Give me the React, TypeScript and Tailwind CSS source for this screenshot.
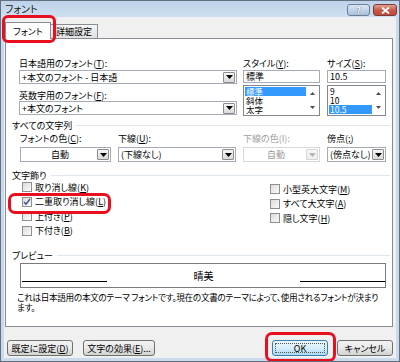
import type { ReactNode } from "react";

const font =
  "font-['Noto_Sans_CJK_JP','Noto_Sans_CJK_SC',sans-serif] [font-feature-settings:'palt']";

function Key({ children }: { children: ReactNode }) {
  return <span className="underline underline-offset-[1px]">{children}</span>;
}

function Arrow({ color = "#000" }: { color?: string }) {
  return (
    <svg width="7" height="4" viewBox="0 0 7 4">
      <path d="M0 0h7L3.5 4z" fill={color} />
    </svg>
  );
}

function DropBtn({ disabled }: { disabled?: boolean }) {
  return (
    <div
      className={`w-[12px] h-[11px] mr-[1px] rounded-[1px] border flex items-center justify-center bg-gradient-to-b ${
        disabled
          ? "border-[#d5d5d5] from-[#f7f7f7] to-[#efefef]"
          : "border-[#8d8d8d] from-[#f6f6f6] to-[#d9d9d9]"
      }`}
    >
      <Arrow color={disabled ? "#b4b4b4" : "#000"} />
    </div>
  );
}

function Combo({
  text,
  className,
  center,
  disabled,
}: {
  text: string;
  className: string;
  center?: boolean;
  disabled?: boolean;
}) {
  return (
    <div
      className={`${className} flex items-center bg-white border ${
        disabled ? "border-[#d9d9d9] text-[#9a9a9a]" : "border-[#a5acb5]"
      }`}
    >
      <span
        className={`flex-1 whitespace-nowrap pl-[2px] ${center ? "text-center" : ""}`}
      >
        {text}
      </span>
      <DropBtn disabled={disabled} />
    </div>
  );
}

function Label({ children, gray }: { children: ReactNode; gray?: boolean }) {
  return (
    <div
      className={`h-[11px] flex items-center whitespace-nowrap ${gray ? "text-[#a0a0a0]" : ""}`}
    >
      {children}
    </div>
  );
}

function ListBox({ items, selected }: { items: string[]; selected: number }) {
  return (
    <div className="mt-[2px] h-[31px] border border-[#828790] bg-white flex">
      <div className="flex-1 flex flex-col pt-[1px] pl-[1px]">
        {items.map((it, i) => (
          <div
            key={it}
            className={`h-[9px] leading-[9px] text-[8.5px] pl-[1px] ${
              i === selected ? "bg-[#3399ff] text-white" : ""
            }`}
          >
            {it}
          </div>
        ))}
      </div>
      <div className="w-[13px] flex flex-col items-center justify-between py-[6px]">
        <svg width="5" height="3" viewBox="0 0 5 3">
          <path d="M0 3h5L2.5 0z" fill="#4d4d4d" />
        </svg>
        <svg width="5" height="3" viewBox="0 0 5 3">
          <path d="M0 0h5L2.5 3z" fill="#4d4d4d" />
        </svg>
      </div>
    </div>
  );
}

function Section({ title }: { title: string }) {
  return (
    <div className="h-[10px] flex items-center">
      <span className="whitespace-nowrap">{title}</span>
      <div className="flex-1 h-px bg-[#dfe5ec] ml-[4px] mr-[2px]" />
    </div>
  );
}

function Check({ children, checked }: { children: ReactNode; checked?: boolean }) {
  return (
    <div className="h-[14.5px] flex items-center">
      <div className="w-[10px] h-[10px] border border-[#8e8f8f] bg-gradient-to-br from-[#dcdcdc] to-[#fbfbfb] flex items-center justify-center">
        {checked && (
          <svg width="8" height="8" viewBox="0 0 8 8">
            <path d="M1 4l2 2.2L7 1" stroke="#3b4f8a" strokeWidth="1.4" fill="none" />
          </svg>
        )}
      </div>
      <span className="ml-[3px] whitespace-nowrap">{children}</span>
    </div>
  );
}

function Btn({ children, className }: { children: ReactNode; className: string }) {
  return (
    <div
      className={`${className} h-[16px] rounded-[3px] border border-[#707070] bg-gradient-to-b from-[#f3f3f3] via-[#e9e9e9] to-[#d2d2d2] flex items-center justify-center whitespace-nowrap`}
    >
      {children}
    </div>
  );
}

export default function App() {
  return (
    <div
      className={`${font} relative w-[400px] h-[362px] overflow-hidden border border-[#627080] bg-[#c9daed] flex flex-col text-[9px] leading-none text-black`}
    >
      {/* title bar */}
      <div className="h-[16px] flex items-start justify-between pl-[4px] bg-gradient-to-b from-[#bdd2ea] to-[#cfdff0]">
        <span className="mt-[3px] text-[10px] text-[#1b1b1b]">フォント</span>
        <div className="flex gap-[3px] mt-[3px] mr-[2px]">
          <div className="w-[23px] h-[12px] rounded-[3px] border border-[#6d7f96] bg-gradient-to-b from-[#d9e6f4] to-[#a9c0dc] flex items-center justify-center text-[9px] font-bold text-white [text-shadow:0_0_1px_#334]">
            ?
          </div>
          <div className="w-[24px] h-[12px] rounded-[3px] border border-[#7a3a3a] bg-gradient-to-b from-[#e3a08f] via-[#c85a48] to-[#c7473a] flex items-center justify-center">
            <svg width="9" height="7" viewBox="0 0 9 7">
              <path d="M1 0.5l7 6M8 0.5l-7 6" stroke="#fff" strokeWidth="1.8" />
            </svg>
          </div>
        </div>
      </div>

      {/* client area */}
      <div className="mx-[3px] h-[341px] bg-[#f0f0f0] flex flex-col">
        {/* tabs */}
        <div className="h-[21px] flex items-end pl-[1px]">
          <div className="relative z-10 -mb-px w-[46px] h-[17px] bg-white border border-b-0 border-[#898c95] flex items-center justify-center">
            フォント
          </div>
          <div className="-ml-px w-[48px] h-[14px] border border-b-0 border-[#898c95] bg-gradient-to-b from-[#f6f6f6] to-[#e1e1e1] flex items-center justify-center">
            詳細設定
          </div>
        </div>

        {/* panel */}
        <div className="ml-[1px] w-[388px] h-[289px] border border-[#898c95] bg-white flex flex-col pl-[6px] pt-[19px]">
          {/* fonts row */}
          <div className="flex ml-[7px]">
            <div className="w-[218px] flex flex-col">
              <Label>
                日本語用のフォント(<Key>T</Key>):
              </Label>
              <Combo className="mt-[1px] h-[14px]" text="+本文のフォント - 日本語" />
              <div className="mt-[6px]">
                <Label>
                  英数字用のフォント(<Key>F</Key>):
                </Label>
              </div>
              <Combo className="h-[14px]" text="+本文のフォント" />
            </div>
            <div className="ml-[6px] w-[77px] flex flex-col">
              <Label>
                スタイル(<Key>Y</Key>):
              </Label>
              <div className="mt-[1px] h-[13px] border border-[#a5acb5] flex items-center pl-[2px]">
                標準
              </div>
              <ListBox items={["標準", "斜体", "太字"]} selected={0} />
            </div>
            <div className="ml-[7px] w-[59px] flex flex-col">
              <Label>
                サイズ(<Key>S</Key>):
              </Label>
              <div className="mt-[1px] h-[13px] border border-[#a5acb5] flex items-center pl-[2px]">
                10.5
              </div>
              <ListBox items={["9", "10", "10.5"]} selected={2} />
            </div>
          </div>

          <div className="mt-[4px]">
            <Section title="すべての文字列" />
          </div>

          {/* colours row */}
          <div className="flex ml-[8px] mt-[3px]">
            <div className="w-[91px] flex flex-col">
              <Label>
                フォントの色(<Key>C</Key>):
              </Label>
              <Combo className="mt-[3px] h-[15px]" text="自動" center />
            </div>
            <div className="ml-[7px] w-[118px] flex flex-col">
              <Label>
                下線(<Key>U</Key>):
              </Label>
              <Combo className="mt-[3px] h-[15px]" text="(下線なし)" />
            </div>
            <div className="ml-[7px] w-[77px] flex flex-col">
              <Label gray>下線の色(I):</Label>
              <Combo className="mt-[3px] h-[15px]" text="自動" center disabled />
            </div>
            <div className="ml-[7px] w-[59px] flex flex-col">
              <Label>
                傍点(<Key>;</Key>)
              </Label>
              <Combo className="mt-[3px] h-[15px]" text="(傍点なし)" />
            </div>
          </div>

          <div className="mt-[8px]">
            <Section title="文字飾り" />
          </div>

          {/* effects */}
          <div className="flex ml-[10px]">
            <div className="w-[248px] flex flex-col">
              <Check>
                取り消し線(<Key>K</Key>)
              </Check>
              <Check checked>
                二重取り消し線(<Key>L</Key>)
              </Check>
              <Check>
                上付き(<Key>P</Key>)
              </Check>
              <Check>
                下付き(<Key>B</Key>)
              </Check>
            </div>
            <div className="flex flex-col pt-[2px]">
              <Check>
                小型英大文字(<Key>M</Key>)
              </Check>
              <Check>
                すべて大文字(<Key>A</Key>)
              </Check>
              <Check>
                隠し文字(<Key>H</Key>)
              </Check>
            </div>
          </div>

          <div className="mt-[12px]">
            <Section title="プレビュー" />
          </div>

          {/* preview */}
          <div className="mt-[3px] ml-[8px] w-[366px] h-[25px] border border-[#7a7a7a] flex items-end pb-[5px]">
            <div className="w-[85px] ml-[1px] h-px bg-black" />
            <div className="flex-1 flex justify-center text-[10px] leading-[10px] pb-[1px]">
              晴美
            </div>
            <div className="w-[85px] h-px bg-black" />
          </div>

          <div className="mt-[4px] ml-[5px] leading-[10px] whitespace-nowrap text-[8.6px] tracking-[-0.3px]">
            これは日本語用の本文のテーマ フォントです。現在の文書のテーマによって、使用されるフォントが決まり
            <br />
            ます。
          </div>
        </div>

        {/* buttons */}
        <div className="mt-[13px] flex pl-[3px] pr-[3px]">
          <Btn className="w-[66px]">
            既定に設定(<Key>D</Key>)
          </Btn>
          <Btn className="ml-[10px] w-[72px]">
            文字の効果(<Key>E</Key>)...
          </Btn>
          <div className="flex-1" />
          <div className="w-[56px] h-[16px] rounded-[3px] border border-[#3c7fb1] bg-gradient-to-b from-[#eaf6fd] via-[#d9f0fc] to-[#a7d9f5] p-[2px]">
            <div className="w-full h-full border border-dotted border-[#555] flex items-center justify-center">
              OK
            </div>
          </div>
          <Btn className="ml-[9px] w-[56px]">キャンセル</Btn>
        </div>
      </div>

      {/* red annotations */}
      <div className="absolute left-[1px] top-[14px] w-[54px] h-[28px] rounded-[6px] border-[3px] border-[#e8101e]" />
      <div className="absolute left-[7px] top-[192px] w-[103px] h-[21px] rounded-[7px] border-[3px] border-[#e8101e]" />
      <div className="absolute left-[264px] top-[331px] w-[71px] h-[30px] rounded-[7px] border-[3px] border-[#e8101e]" />
    </div>
  );
}
